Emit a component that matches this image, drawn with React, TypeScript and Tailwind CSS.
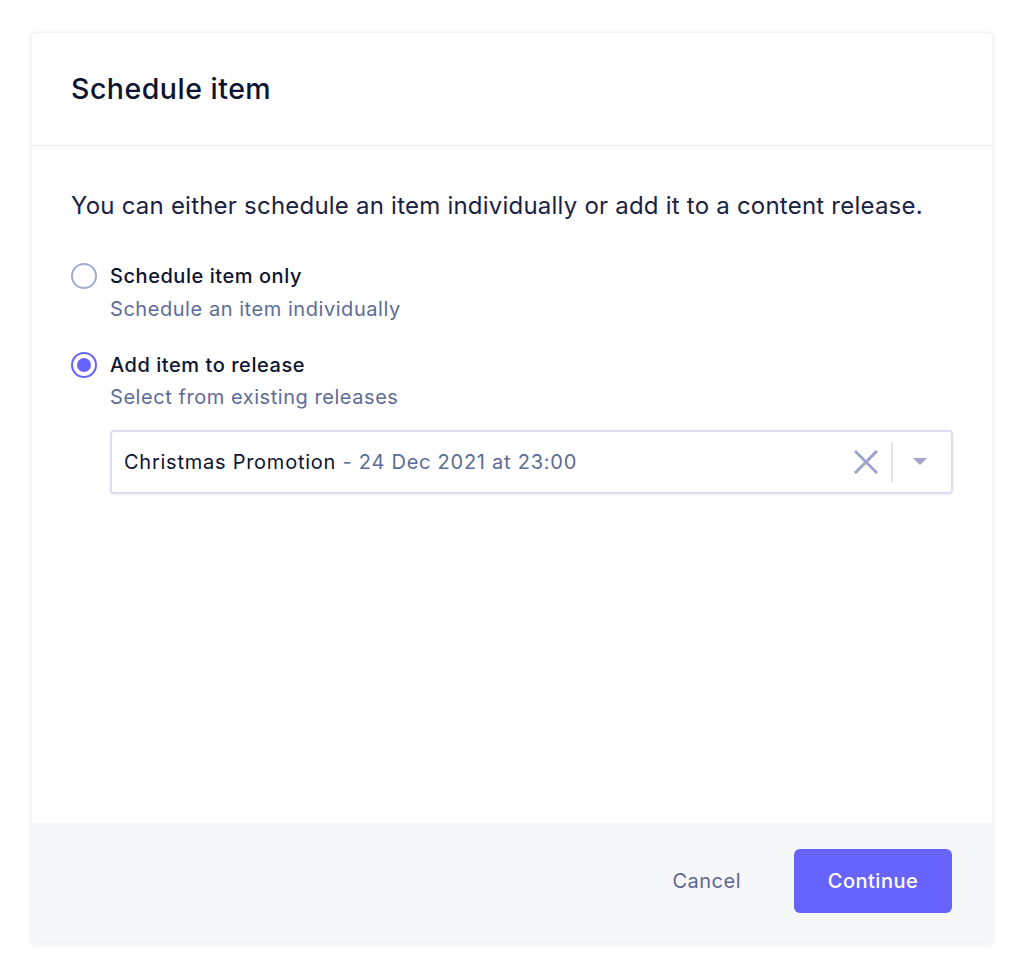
import React from "react";

export default function App() {
  return (
    <div className="min-h-[972px] bg-white pt-8" style={{ fontFamily: "Inter, 'Noto Sans', sans-serif" }}>
      <div className="mx-auto w-[962px] rounded-md bg-white shadow-[0_1px_6px_rgba(16,24,64,0.08)] border border-[#f1f2f6] overflow-hidden">
        <div className="h-[113px] flex items-center pl-[39px] pr-10 border-b border-[#eceef5]">
          <h1 className="text-[28.5px] font-medium text-[#0d1430] tracking-[0.5px]">Schedule item</h1>
        </div>
        <div className="h-[677px] pl-[39px] pr-10 pt-[44px]">
          <p className="text-[24px] leading-[32px] text-[#1a2244] tracking-[0.22px]">
            You can either schedule an item individually or add it to a content release.
          </p>
          <div className="mt-[39px] flex flex-col gap-[23px]">
            <div className="flex items-start gap-[13px]">
              <span className="mt-[2px] w-[26px] h-[26px] rounded-full border-2 border-[#a7acd6] bg-white shrink-0" />
              <div className="flex flex-col">
                <span className="text-[20px] leading-[31px] font-medium text-[#0d1430] tracking-[0.55px]">Schedule item only</span>
                <span className="text-[20px] leading-[35px] text-[#5d6b98] tracking-[0.55px]">Schedule an item individually</span>
              </div>
            </div>
            <div className="flex items-start gap-[13px]">
              <span className="mt-[2px] w-[26px] h-[26px] rounded-full border-2 border-[#6664fc] bg-white shrink-0 flex items-center justify-center">
                <span className="w-[14px] h-[14px] rounded-full bg-[#6664fc]" />
              </span>
              <div className="flex flex-col flex-1">
                <span className="text-[20px] leading-[30px] font-medium text-[#0d1430] tracking-[0.55px]">Add item to release</span>
                <span className="text-[20px] leading-[35px] text-[#5d6b98] tracking-[0.55px]">Select from existing releases</span>
                <div className="mt-[15px] h-[64px] w-[843px] rounded-[4px] border-2 border-[#dcdef0] bg-white shadow-[0_1px_3px_rgba(16,24,64,0.08)] flex items-center pl-[12px]">
                  <div className="flex-1 text-[20px] text-[#0d1430] tracking-[0.75px]">
                    Christmas Promotion <span className="text-[#5d6b98]">- 24 Dec 2021 at 23:00</span>
                  </div>
                  <svg width="24" height="24" viewBox="0 0 24 24" className="mr-[13px]">
                    <path d="M2 2 L22 22 M22 2 L2 22" stroke="#9da3cc" strokeWidth="3" strokeLinecap="square" />
                  </svg>
                  <span className="w-[2px] h-[40px] bg-[#e1e3f1]" />
                  <svg width="14" height="8" viewBox="0 0 14 8" className="ml-[20px] mr-[24px]">
                    <path d="M0 0 L14 0 L7 7 Z" fill="#9da3cc" />
                  </svg>
                </div>
              </div>
            </div>
          </div>
        </div>
        <div className="h-[120px] bg-[#f6f7f9] flex items-start pt-[26px] justify-end px-10 gap-[53px]">
          <button className="h-[64px] text-[20px] text-[#5b6894] tracking-[0.5px]">Cancel</button>
          <button className="w-[158px] h-[64px] rounded-[6px] bg-[#6664fc] text-white text-[20px] font-medium tracking-[0.5px]">Continue</button>
        </div>
      </div>
    </div>
  );
}
